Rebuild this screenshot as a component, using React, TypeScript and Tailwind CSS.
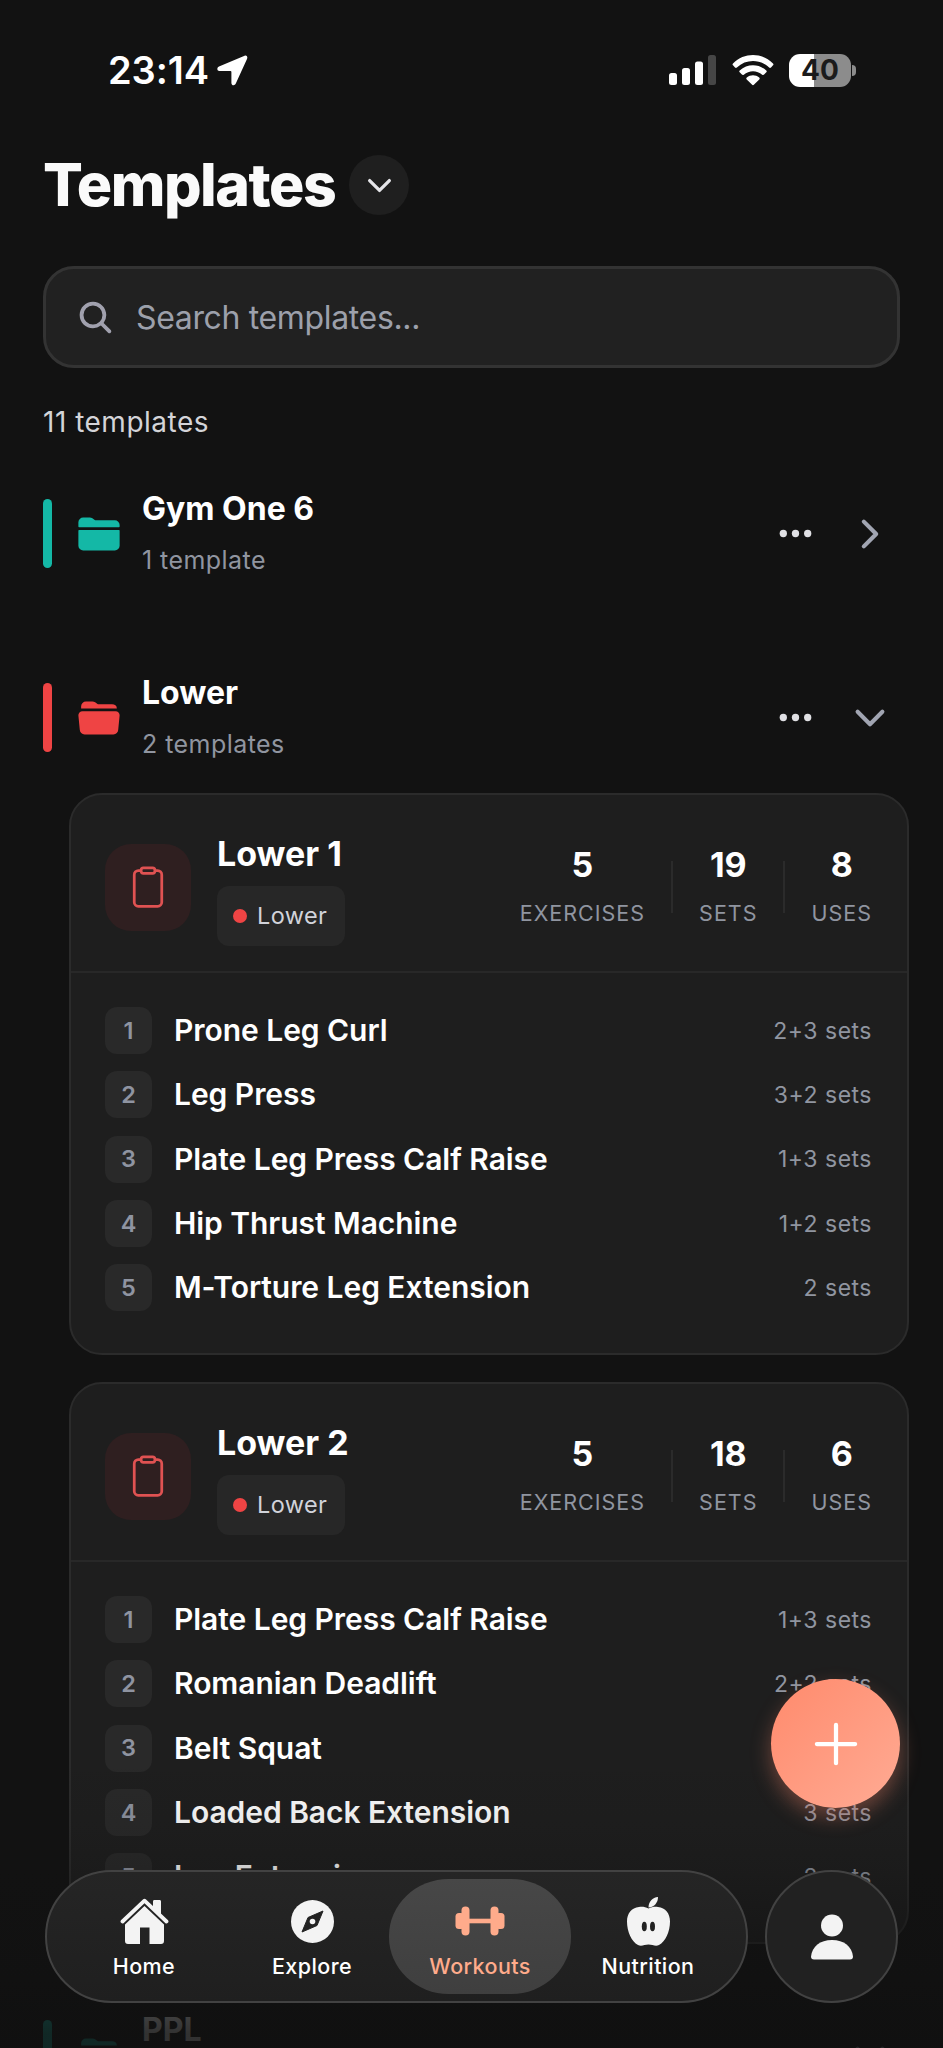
import { useState } from "react"
import {
  IoAdd,
  IoChevronDown,
  IoChevronForward,
  IoClipboardOutline,
  IoEllipsisHorizontal,
  IoFolder,
  IoFolderOpen,
  IoSearch,
} from "react-icons/io5"

type Exercise = { name: string; sets: string }

type Template = {
  name: string
  folder: string
  sets: number
  uses: number
  exercises: Exercise[]
}

const lowerTemplates: Template[] = [
  {
    name: "Lower 1",
    folder: "Lower",
    sets: 19,
    uses: 8,
    exercises: [
      { name: "Prone Leg Curl", sets: "2+3 sets" },
      { name: "Leg Press", sets: "3+2 sets" },
      { name: "Plate Leg Press Calf Raise", sets: "1+3 sets" },
      { name: "Hip Thrust Machine", sets: "1+2 sets" },
      { name: "M-Torture Leg Extension", sets: "2 sets" },
    ],
  },
  {
    name: "Lower 2",
    folder: "Lower",
    sets: 18,
    uses: 6,
    exercises: [
      { name: "Plate Leg Press Calf Raise", sets: "1+3 sets" },
      { name: "Romanian Deadlift", sets: "2+2 sets" },
      { name: "Belt Squat", sets: "3 sets" },
      { name: "Loaded Back Extension", sets: "3 sets" },
      { name: "Leg Extension", sets: "2 sets" },
    ],
  },
]

const StatusBar = () => (
  <div className="flex h-[140px] items-center justify-between pl-[108px] pr-[87px] text-white">
    <div className="flex items-center">
      <span className="w-[109px] whitespace-nowrap text-[38px] font-semibold leading-none tracking-[-0.1px]">23:14</span>
      <svg width="31" height="31" viewBox="0 0 31 31" fill="#fff">
        <path d="M27.6.7 2 11.6C-.4 12.700-.2 15.900 2.500 16h11c.6 0 .9.4.9.9v11c.1 2.800 3.300 3.200 4.400.7L30 4C31 1.700 29.500-.1 27.600.7Z" />
      </svg>
    </div>
    <div className="flex items-center">
      <svg width="48" height="32" viewBox="0 0 48 32" fill="#fff">
        <rect x="0" y="19" width="8" height="12" rx="2.500" />
        <rect x="13" y="14" width="8" height="17" rx="2.500" />
        <rect x="26" y="7.500" width="8" height="23.500" rx="2.500" />
        <rect x="39" y="1" width="8" height="30" rx="2.500" fill="#464646" />
      </svg>
      <svg className="ml-[15px]" width="42" height="32" viewBox="0 0 42 32" fill="#fff">
        <path d="M1 9.500C12-1.700 30-1.700 41 9.500c.6.600.6 1.200 0 1.800l-2 2.200c-.6.600-1.300.600-1.900 0-9-8.600-23.200-8.600-32.200 0-.6.600-1.300.600-1.900 0l-2-2.200c-.6-.6-.6-1.200 0-1.800Z" />
        <path d="M7.700 16.500c7.600-7 19-7 26.600 0 .6.600.6 1.200 0 1.800l-2.200 2.300c-.6.600-1.200.600-1.900.1-5.200-4.700-13.200-4.700-18.400 0-.7.500-1.300.500-1.900-.1l-2.200-2.300c-.6-.6-.6-1.200 0-1.800Z" />
        <path d="M14.800 23.600c3.500-3 8.900-3 12.400 0 .7.600.7 1.200.1 1.800l-5.200 5.200c-.7.700-1.500.7-2.200 0l-5.200-5.200c-.6-.6-.6-1.200.1-1.800Z" />
      </svg>
      <div className="ml-[15px] flex h-[33px] w-[62px] items-center justify-center rounded-[11px] bg-[linear-gradient(90deg,#fff_40%,#8c8c8c_40%)] text-[28px] font-bold leading-[33px] text-[#1b1b1b]">
        40
      </div>
      <div className="ml-[1px] h-[11px] w-[4px] rounded-r-full bg-[#8c8c8c]" />
    </div>
  </div>
)

const FolderRow = ({ name, count, open, color }: { name: string; count?: string; open?: boolean; color: "teal" | "red" }) => {
  const teal = color === "teal"
  return (
    <div className="flex h-[133px] items-center pl-[43px] pr-[51px]">
      <div className={teal ? "h-[69px] w-[9px] rounded-full bg-[#14b8a6]" : "h-[69px] w-[9px] rounded-full bg-[#ef4444]"} />
      <div className={teal ? "ml-[25px] text-[#14b8a6]" : "ml-[25px] text-[#ef4444]"}>
        {open ? <IoFolderOpen size={44} /> : <IoFolder size={44} />}
      </div>
      <div className="ml-[21px] flex-1 pb-[3px]">
        <div className="text-[32px] font-bold leading-[44px] text-white">{name}</div>
        <div className="mt-[11px] h-[36px] text-[25px] leading-[36px] tracking-[0.450px] text-[#9095a0]">{count}</div>
      </div>
      <IoEllipsisHorizontal size={39} className="mr-[33px] text-[#e0e0e4]" />
      {open ? <IoChevronDown size={44} className="text-[#a1a5b2]" /> : <IoChevronForward size={44} className="text-[#a1a5b2]" />}
    </div>
  )
}

const Stat = ({ value, label }: { value: number; label: string }) => (
  <div className="flex flex-col items-center pb-[4px]">
    <span className="text-[34px] font-bold leading-[44px] text-white">{value}</span>
    <span className="mt-[11px] text-[21.500px] leading-[30px] tracking-[1px] text-[#9095a0]">{label}</span>
  </div>
)

const TemplateCard = ({ template }: { template: Template }) => (
  <div className="ml-[69px] mr-[34px] h-[562px] rounded-[33px] border-2 border-[#2b2b2b] bg-[#1e1e1e]">
    <div className="flex h-[178px] items-center border-b-2 border-[#282828] pl-[34px] pr-[35px] pt-[8px]">
      <div className="flex h-[87px] w-[86px] items-center justify-center rounded-[26px] bg-[#2f1f20] text-[#e05252]">
        <IoClipboardOutline size={44} />
      </div>
      <div className="ml-[26px] pt-[3px]">
        <div className="text-[34px] font-bold leading-[44px] text-white">{template.name}</div>
        <div className="mt-[10px] flex h-[60px] w-[128px] items-center rounded-[12px] bg-[#272727] pl-[16px]">
          <span className="h-[14px] w-[14px] rounded-full bg-[#ef4444]" />
          <span className="ml-[10px] text-[23.500px] tracking-[0.4px] text-[#d1d3da]">{template.folder}</span>
        </div>
      </div>
      <div className="ml-auto flex items-center">
        <Stat value={template.exercises.length} label="EXERCISES" />
        <div className="mx-[26px] h-[52px] w-[2px] bg-[#2b2b2b]" />
        <Stat value={template.sets} label="SETS" />
        <div className="mx-[26px] h-[52px] w-[2px] bg-[#2b2b2b]" />
        <Stat value={template.uses} label="USES" />
      </div>
    </div>
    <ul className="flex flex-col gap-[17.250px] pl-[34px] pr-[35px] pt-[34px]">
      {template.exercises.map((exercise, i) => (
        <li key={exercise.name} className="flex h-[47px] items-center">
          <span className="flex h-[47px] w-[47px] items-center justify-center rounded-[12px] bg-[#292929] text-[23.500px] font-semibold text-[#8f94a1]">
            {i + 1}
          </span>
          <span className="ml-[22px] text-[30px] font-semibold tracking-[-0.050px] text-white">{exercise.name}</span>
          <span className="ml-auto pt-[1px] text-[23px] tracking-[0.500px] text-[#9095a0]">{exercise.sets}</span>
        </li>
      ))}
    </ul>
  </div>
)

const HomeIcon = () => (
  <svg width="49" height="46" viewBox="0 0 49 46">
    <path d="M33 3.500c0-1 .6-1.500 1.500-1.500h5c.9 0 1.500.5 1.500 1.500V18l-8-7Z" fill="#f3f3f3" />
    <path d="M2.500 23.500 24.500 2.700 46.500 23.500" fill="none" stroke="#f3f3f3" strokeWidth="3.800" strokeLinecap="round" strokeLinejoin="round" />
    <path d="M24.500 8 5 26.500V43a3 3 0 0 0 3 3H20V29.500h9.500V46h11.500a3 3 0 0 0 3-3V26.500Z" fill="#f3f3f3" />
  </svg>
)

const CompassIcon = () => (
  <svg width="43" height="43" viewBox="0 0 43 43">
    <circle cx="21.500" cy="21.500" r="21.500" fill="#f3f3f3" />
    <path d="M32 11 26 25.500 11 32 17 17.500Z" fill="#222" stroke="#222" strokeLinejoin="round" />
    <circle cx="21.500" cy="21.500" r="2.800" fill="#f3f3f3" />
  </svg>
)

const DumbbellIcon = () => (
  <svg width="50" height="30" viewBox="0 0 50 30" fill="#ffab8b">
    <rect x="0.500" y="7" width="9" height="16" rx="3.500" />
    <rect x="6.500" y="0.500" width="8" height="29" rx="4" />
    <rect x="12" y="12.700" width="26" height="4.600" />
    <rect x="35.500" y="0.500" width="8" height="29" rx="4" />
    <rect x="40.500" y="7" width="9" height="16" rx="3.500" />
  </svg>
)

const AppleIcon = () => (
  <svg width="43" height="49" viewBox="0 0 43 49">
    <path d="M21.500 10.500C21.500 4.500 25.500.5 31 0c0 5.500-3.500 10-9.500 10.500Z" fill="#f3f3f3" />
    <path d="M21.500 11.500c3-1.500 6-2 9.500-1.500 7.500.8 12 6.500 12 14.500 0 10-4.500 20-11 23.500-3.500 1.700-6.500-.5-10.500-.5s-7 2.200-10.500.5C4.500 44.500 0 34.500 0 24.500c0-8 4.500-13.700 12-14.500 3.500-.5 6.500 0 9.500 1.500Z" fill="#f3f3f3" />
    <ellipse cx="17.300" cy="29.500" rx="2.500" ry="4.700" fill="#222" />
    <ellipse cx="25.500" cy="29.500" rx="2.500" ry="4.700" fill="#222" />
  </svg>
)

const tabs = [
  { label: "Home", icon: <HomeIcon /> },
  { label: "Explore", icon: <CompassIcon /> },
  { label: "Workouts", icon: <DumbbellIcon /> },
  { label: "Nutrition", icon: <AppleIcon /> },
]

const BottomNav = () => {
  const [active, setActive] = useState("Workouts")

  return (
    <nav className="absolute left-[45px] top-[1870px] flex gap-[17px]">
      <div className="flex h-[133px] w-[703px] items-center rounded-full border-2 border-[#424242] bg-[linear-gradient(#252525,#1f1f1f)] pl-[13px]">
        {tabs.map((tab) => (
          <button
            key={tab.label}
            onClick={() => setActive(tab.label)}
            className={
              active === tab.label
                ? "-mx-[7px] flex h-[115px] w-[182px] shrink-0 flex-col items-center rounded-[60px/57px] bg-[linear-gradient(#474747,#3f3f3f)] pt-[17px] text-[#ffab8b]"
                : "flex h-[115px] w-[168px] shrink-0 flex-col items-center pt-[17px] text-white"
            }
          >
            <span className="flex h-[50px] items-center">{tab.icon}</span>
            <span className="mt-[5px] text-[21.500px] font-medium leading-[30px] tracking-[0.4px]">{tab.label}</span>
          </button>
        ))}
      </div>
      <button className="flex h-[133px] w-[133px] items-center justify-center rounded-full border-2 border-[#424242] bg-[#212121]">
        <svg width="42" height="46" viewBox="0 0 42 46" fill="#f3f3f3">
          <circle cx="21" cy="11.500" r="11" />
          <path d="M0 42.500C1 32.500 9 26 21 26s20 6.500 21 16.500c0 2-1 3-3 3H3c-2 0-3-1-3-3Z" />
        </svg>
      </button>
    </nav>
  )
}

export default function App() {
  return (
    <div className="relative h-[2048px] w-[943px] overflow-hidden bg-[#121212] font-[Inter,sans-serif]">
      <StatusBar />

      <div className="mt-[15px] flex h-[60px] items-center pl-[43px]">
        <h1 className="w-[306px] whitespace-nowrap pb-[2px] text-[59px] font-extrabold leading-none tracking-[-1.500px] text-[#fafafa]">Templates</h1>
        <button className="flex h-[60px] w-[60px] items-center justify-center rounded-full bg-[#1f1f1f] text-[#e4e4e8]">
          <IoChevronDown size={35} />
        </button>
      </div>

      <div className="mx-[43px] mt-[51px] flex h-[102px] items-center rounded-[31px] border-[3px] border-[#333] bg-[#212121] pl-[30px]">
        <IoSearch size={39} className="text-[#a1a1ae]" />
        <span className="ml-[21px] pt-[1px] text-[32px] tracking-[-0.350px] text-[#9ca0ab]">Search templates...</span>
      </div>

      <div className="mt-[34px] pl-[43px] text-[28px] leading-[40px] tracking-[0.5px] text-[#d4d4d8]">11 templates</div>

      <div className="mt-[25px]">
        <FolderRow name="Gym One 6" count="1 template" color="teal" />
      </div>
      <div className="mt-[51px]">
        <FolderRow name="Lower" count="2 templates" color="red" open />
      </div>
      <div className="mt-[9px] flex flex-col gap-[27px]">
        {lowerTemplates.map((template) => (
          <TemplateCard key={template.name} template={template} />
        ))}
      </div>
      <div className="mt-[44px]">
        <FolderRow name="PPL" color="teal" open />
      </div>

      {/* fade behind the tab bar */}
      <div className="pointer-events-none absolute inset-x-0 bottom-0 h-[288px] bg-[linear-gradient(rgba(18,18,18,0),rgba(18,18,18,0.1)_25%,rgba(18,18,18,0.22)_38%,rgba(17,17,17,0.600)_65%,rgba(16,16,16,0.860)_95%)]" />

      <button className="absolute left-[771px] top-[1679px] flex h-[129px] w-[129px] items-center justify-center rounded-full bg-[linear-gradient(135deg,#ff8a6c,#ffab94)] text-white shadow-[0_9px_20px_rgba(255,138,108,0.35)]">
        <IoAdd size={68} />
      </button>

      <BottomNav />
    </div>
  )
}
